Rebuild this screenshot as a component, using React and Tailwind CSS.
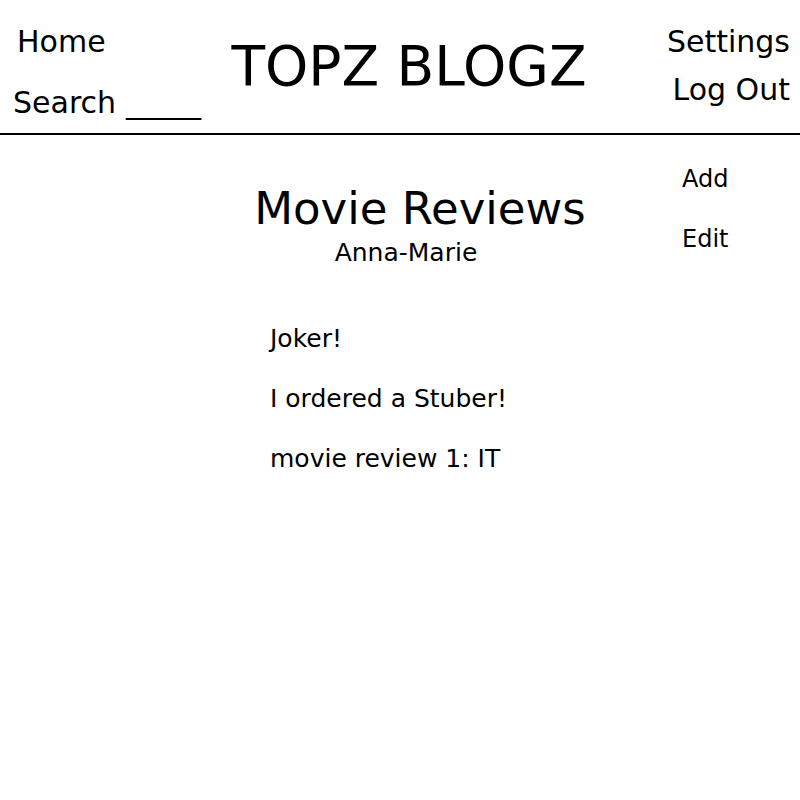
import React from "react";

const reviews = ["Joker!", "I ordered a Stuber!", "movie review 1: IT"];

const App = () => {
  return (
    <div className="min-h-screen w-[800px] bg-white text-black font-['DejaVu_Sans',_Verdana,_sans-serif]">
      {/* Header */}
      <header className="flex items-start h-[135px] border-b-2 border-black">
        <nav className="w-[200px] flex flex-col text-[30px] leading-[35px]">
          <a href="#" className="mt-[24px] pl-[17px]">
            Home
          </a>
          <a href="#" className="mt-[26px] pl-[13px] whitespace-nowrap">
            Search <span className="inline-block scale-x-[1.25] origin-left">____</span>
          </a>
        </nav>
        <div className="flex-1 text-center">
          <h1 className="mt-[34px] text-[55px] leading-[64px]">TOPZ BLOGZ</h1>
        </div>
        <nav className="w-[182px] pr-[10px] flex flex-col items-end text-[30px] leading-[35px]">
          <a href="#" className="mt-[24px]">
            Settings
          </a>
          <a href="#" className="mt-[13px]">
            Log Out
          </a>
        </nav>
      </header>

      {/* Body */}
      <div className="flex">
        <main className="w-[640px]">
          <h2 className="mt-[48px] pl-[200px] text-center text-[45px] leading-[52px]">
            Movie Reviews
          </h2>
          <p className="mt-[3px] pl-[172px] text-center text-[25px] leading-[29px]">
            Anna-Marie
          </p>
          <ul className="mt-[57px] pl-[270px] flex flex-col gap-[31px] text-[25px] leading-[29px]">
            {reviews.map((title) => (
              <li key={title}>
                <a href="#">{title}</a>
              </li>
            ))}
          </ul>
        </main>
        <aside className="pl-[42px] flex flex-col text-[24px] leading-[28px]">
          <a href="#" className="mt-[30px]">
            Add
          </a>
          <a href="#" className="mt-[32px]">
            Edit
          </a>
        </aside>
      </div>
    </div>
  );
};

export default App;
